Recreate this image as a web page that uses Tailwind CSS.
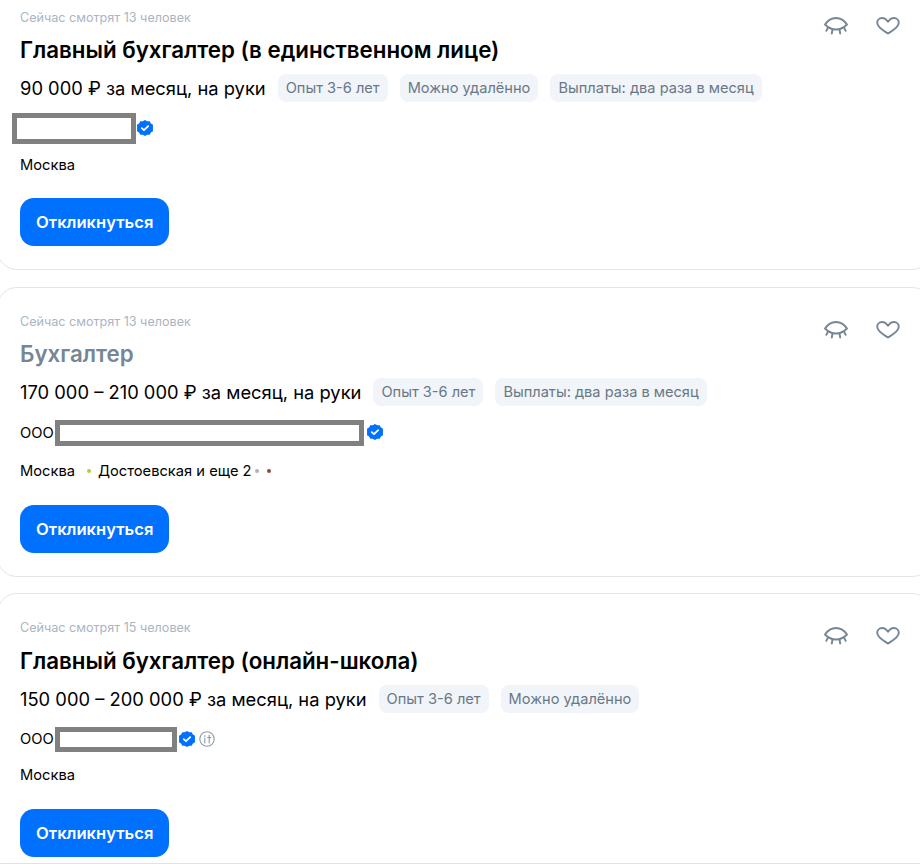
<!DOCTYPE html>
<html lang="ru">
<head>
  <meta charset="UTF-8" />
  <meta name="viewport" content="width=device-width, initial-scale=1.0"/>
  <title>Вакансии</title>
  <script src="https://cdn.jsdelivr.net/npm/@tailwindcss/browser@4"></script>
</head>
<body class="bg-white text-black font-['Inter',sans-serif]">
  <div class="relative h-[864px] overflow-hidden border-b border-[#dfe3e6]">
    <div class="-ml-[3px] -mr-[12px] -mt-[17px] flex flex-col gap-[17px]">

      <!-- вакансия 1 -->
      <article class="flex justify-between rounded-[20px] border border-[#e2e5e8] pl-[22px] pr-[31px] pt-[24px] pb-[23px]">
        <div>
          <p class="text-[12.6px] leading-5 text-[#aab5bf]">Сейчас смотрят 13 человек</p>
          <h2 class="mt-[8px] text-[22.3px] leading-7 font-semibold">Главный бухгалтер (в единственном лице)</h2>
          <div class="mt-[10px] flex items-center gap-3">
            <span class="text-[18.35px] leading-7">90 000 ₽ за месяц, на руки</span>
            <span class="rounded-lg bg-[#f1f4f9] px-2 text-[14.6px] leading-7 text-[#6a7885]">Опыт 3-6 лет</span>
            <span class="rounded-lg bg-[#f1f4f9] px-2 text-[14.6px] leading-7 text-[#6a7885]">Можно удалённо</span>
            <span class="rounded-lg bg-[#f1f4f9] px-2 text-[14.6px] leading-7 text-[#6a7885]">Выплаты: два раза в месяц</span>
          </div>
          <div class="mt-[11px] flex h-[31px] items-center gap-px">
            <div class="-ml-2 h-[31px] w-[124px] border-[5px] border-[#808080] bg-white"></div>
            <svg class="mb-[2px] h-4 w-4" viewBox="0 0 16 16"><path fill="#0070ff" d="M8 0l2.2 1.3 2.5-.1 1.2 2.2 2.1 1.3-.1 2.5L16 8l-.1.8.1 2.5-2.1 1.3-1.2 2.2-2.5-.1L8 16l-2.2-1.3-2.5.1-1.2-2.2L0 11.300.1 8.800 0 8l.1-.8L0 4.700l2.100-1.300 1.200-2.200 2.500.1z"/><path fill="none" stroke="#fff" stroke-width="1.800" stroke-linecap="round" stroke-linejoin="round" d="M4.800 8.200l2.200 2 4.200-4"/></svg>
          </div>
          <p class="mt-[11px] text-[14.7px] leading-5">Москва</p>
          <button class="mt-[23px] block h-12 rounded-[14px] bg-[#0070ff] px-4 text-[16.6px] font-semibold text-white">Откликнуться</button>
        </div>
        <div class="flex items-start gap-[28px] pt-[6px]">
          <svg class="h-6 w-6" viewBox="0 0 24 24" fill="none" stroke="#768694" stroke-width="1.900" stroke-linecap="round" stroke-linejoin="round"><path d="M1 10.500C4 6 8 4 12 4S20 6 23 10.500C20 13.500 16 15.500 12 15.500S4 13.500 1 10.500z"/><path d="M3.800 13.800L2.300 16.800M8.500 15.500L7.800 19.500M15.500 15.500L16.200 19.500M20.200 13.800L21.700 16.800"/></svg>
          <svg class="mt-[3px] h-[18px] w-6" viewBox="0 0 24 18" fill="none" stroke="#768694" stroke-width="1.900" stroke-linejoin="round"><path d="M12 16.500C8 14 1.200 10.500 1.200 5.800 1.200 3 3.400 1 6 1 8.300 1 10.500 2.500 12 4.800 13.500 2.500 15.700 1 18 1 20.600 1 22.800 3 22.800 5.800 22.800 10.500 16 14 12 16.500z"/></svg>
        </div>
      </article>

      <!-- вакансия 2 -->
      <article class="flex justify-between rounded-[20px] border border-[#e2e5e8] pl-[22px] pr-[31px] pt-[24px] pb-[23px]">
        <div>
          <p class="text-[12.6px] leading-5 text-[#aab5bf]">Сейчас смотрят 13 человек</p>
          <h2 class="mt-[8px] text-[22.3px] leading-7 font-semibold text-[#768694]">Бухгалтер</h2>
          <div class="mt-[10px] flex items-center gap-3">
            <span class="text-[18.35px] leading-7">170 000 – 210 000 ₽ за месяц, на руки</span>
            <span class="rounded-lg bg-[#f1f4f9] px-2 text-[14.6px] leading-7 text-[#6a7885]">Опыт 3-6 лет</span>
            <span class="rounded-lg bg-[#f1f4f9] px-2 text-[14.6px] leading-7 text-[#6a7885]">Выплаты: два раза в месяц</span>
          </div>
          <div class="mt-[14px] flex h-[26px] items-center">
            <span class="text-[14.7px]">ООО</span>
            <div class="ml-px h-[26px] w-[309px] border-[5px] border-[#808080] bg-white"></div>
            <svg class="mb-[2px] ml-[3px] h-4 w-4" viewBox="0 0 16 16"><path fill="#0070ff" d="M8 0l2.2 1.3 2.5-.1 1.2 2.2 2.1 1.3-.1 2.5L16 8l-.1.8.1 2.5-2.1 1.3-1.2 2.2-2.5-.1L8 16l-2.2-1.3-2.5.1-1.2-2.2L0 11.300.1 8.800 0 8l.1-.8L0 4.700l2.100-1.300 1.200-2.200 2.500.1z"/><path fill="none" stroke="#fff" stroke-width="1.800" stroke-linecap="round" stroke-linejoin="round" d="M4.800 8.200l2.200 2 4.200-4"/></svg>
          </div>
          <div class="mt-[15px] flex h-5 items-center text-[14.7px] leading-5">
            <span>Москва</span>
            <span class="ml-3 h-1 w-1 rounded-full bg-[#b5c83c]"></span>
            <span class="ml-[7px]">Достоевская и еще 2</span>
            <span class="ml-[3px] h-1 w-1 rounded-full bg-[#b0b0bc]"></span>
            <span class="ml-[8px] h-1 w-1 rounded-full bg-[#8f4a3a]"></span>
          </div>
          <button class="mt-[24px] block h-12 rounded-[14px] bg-[#0070ff] px-4 text-[16.6px] font-semibold text-white">Откликнуться</button>
        </div>
        <div class="flex items-start gap-[28px] pt-[6px]">
          <svg class="h-6 w-6" viewBox="0 0 24 24" fill="none" stroke="#768694" stroke-width="1.900" stroke-linecap="round" stroke-linejoin="round"><path d="M1 10.500C4 6 8 4 12 4S20 6 23 10.500C20 13.500 16 15.500 12 15.500S4 13.500 1 10.500z"/><path d="M3.800 13.800L2.300 16.800M8.500 15.500L7.800 19.500M15.500 15.500L16.200 19.500M20.200 13.800L21.700 16.800"/></svg>
          <svg class="mt-[3px] h-[18px] w-6" viewBox="0 0 24 18" fill="none" stroke="#768694" stroke-width="1.900" stroke-linejoin="round"><path d="M12 16.500C8 14 1.200 10.500 1.200 5.800 1.200 3 3.400 1 6 1 8.300 1 10.500 2.500 12 4.800 13.500 2.500 15.700 1 18 1 20.600 1 22.800 3 22.800 5.800 22.800 10.500 16 14 12 16.500z"/></svg>
        </div>
      </article>

      <!-- вакансия 3 -->
      <article class="-mt-px flex justify-between rounded-[20px] border border-[#e2e5e8] pl-[22px] pr-[31px] pt-[24px] pb-[23px]">
        <div>
          <p class="text-[12.6px] leading-5 text-[#aab5bf]">Сейчас смотрят 15 человек</p>
          <h2 class="mt-[9px] text-[22.3px] leading-7 font-semibold">Главный бухгалтер (онлайн-школа)</h2>
          <div class="mt-[10px] flex items-center gap-3">
            <span class="text-[18.35px] leading-7">150 000 – 200 000 ₽ за месяц, на руки</span>
            <span class="rounded-lg bg-[#f1f4f9] px-2 text-[14.6px] leading-7 text-[#6a7885]">Опыт 3-6 лет</span>
            <span class="rounded-lg bg-[#f1f4f9] px-2 text-[14.6px] leading-7 text-[#6a7885]">Можно удалённо</span>
          </div>
          <div class="mt-[13px] flex h-[26px] items-center">
            <span class="text-[14.7px]">ООО</span>
            <div class="ml-px h-[25px] w-[122px] border-[5px] border-[#808080] bg-white"></div>
            <svg class="ml-[2px] h-4 w-4" viewBox="0 0 16 16"><path fill="#0070ff" d="M8 0l2.2 1.3 2.5-.1 1.2 2.2 2.1 1.3-.1 2.5L16 8l-.1.8.1 2.5-2.1 1.3-1.2 2.2-2.5-.1L8 16l-2.2-1.3-2.5.1-1.2-2.2L0 11.300.1 8.800 0 8l.1-.8L0 4.700l2.100-1.300 1.200-2.200 2.500.1z"/><path fill="none" stroke="#fff" stroke-width="1.800" stroke-linecap="round" stroke-linejoin="round" d="M4.800 8.200l2.200 2 4.200-4"/></svg>
            <svg class="ml-1 h-4 w-4" viewBox="0 0 16 16" fill="none" stroke="#8d9aa6" stroke-width="1.100" stroke-linecap="round"><circle cx="8" cy="8" r="7.200"/><path d="M5.800 4.500v1M5.800 7v5M10.200 4v8M8.500 6.500h3.400"/></svg>
          </div>
          <p class="mt-[13px] text-[14.7px] leading-5">Москва</p>
          <button class="mt-[24px] block h-12 rounded-[14px] bg-[#0070ff] px-4 text-[16.6px] font-semibold text-white">Откликнуться</button>
        </div>
        <div class="flex items-start gap-[28px] pt-[6px]">
          <svg class="h-6 w-6" viewBox="0 0 24 24" fill="none" stroke="#768694" stroke-width="1.900" stroke-linecap="round" stroke-linejoin="round"><path d="M1 10.500C4 6 8 4 12 4S20 6 23 10.500C20 13.500 16 15.500 12 15.500S4 13.500 1 10.500z"/><path d="M3.800 13.800L2.300 16.800M8.500 15.500L7.800 19.500M15.500 15.500L16.200 19.500M20.200 13.800L21.700 16.800"/></svg>
          <svg class="mt-[3px] h-[18px] w-6" viewBox="0 0 24 18" fill="none" stroke="#768694" stroke-width="1.900" stroke-linejoin="round"><path d="M12 16.500C8 14 1.200 10.500 1.200 5.800 1.200 3 3.400 1 6 1 8.300 1 10.500 2.500 12 4.800 13.500 2.500 15.700 1 18 1 20.600 1 22.800 3 22.800 5.800 22.800 10.500 16 14 12 16.500z"/></svg>
        </div>
      </article>

    </div>
  </div>
</body>
</html>
